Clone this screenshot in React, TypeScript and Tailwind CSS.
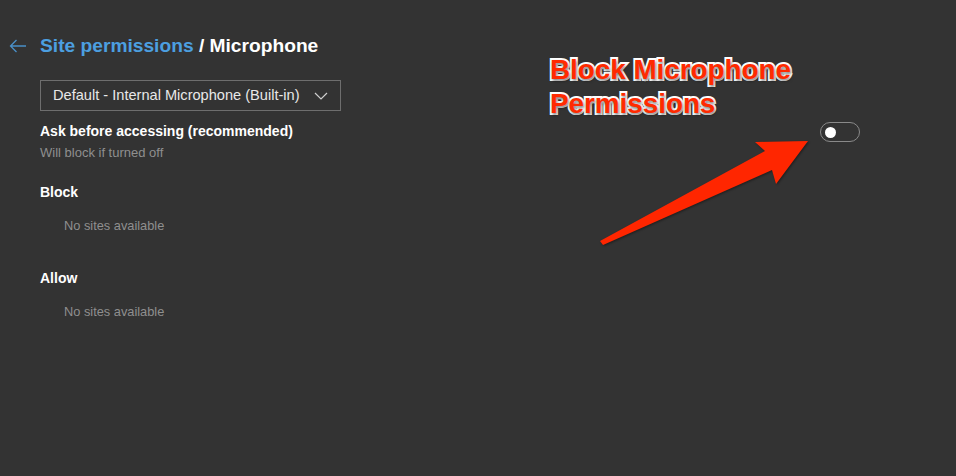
export default function App() {
  return (
    <div className="relative h-[476px] w-[956px] overflow-hidden bg-[#333333] font-['Liberation_Sans',Arial,sans-serif] text-white">
      <div className="flex flex-col pt-[34px]">
        <div className="flex items-center">
          <svg width="18" height="14" viewBox="0 0 18 14" className="ml-[9px] mr-[13px]">
            <path d="M17 7H1.5M7.5 1L1.5 7l6 6" fill="none" stroke="#4a90c8" strokeWidth="1.3" />
          </svg>
          <h1 className="text-[19.2px] font-bold leading-[24px]">
            <span className="text-[#4c9fe0]">Site permissions</span> / Microphone
          </h1>
        </div>

        <div className="ml-[40px] mt-[22px] flex h-[31px] w-[301px] items-center justify-between border border-[#6e6e6e] pl-3 pr-3">
          <span className="text-[14.6px] text-[#e8e8e8]">Default - Internal Microphone (Built-in)</span>
          <svg width="14" height="8" viewBox="0 0 14 8">
            <path d="M1 1l6 6 6-6" fill="none" stroke="#cfcfcf" strokeWidth="1.2" />
          </svg>
        </div>

        <div className="ml-[40px] mt-[10px] flex w-[820px] items-start justify-between">
          <div className="flex flex-col">
            <span className="text-[14px] font-bold leading-[20px]">Ask before accessing (recommended)</span>
            <span className="mt-[3px] text-[13px] leading-[17px] text-[#8f8f8f]">Will block if turned off</span>
          </div>
          <div className="mt-[1px] flex h-[20px] w-[40px] items-center rounded-full border border-[#8a8a8a] px-[4px]">
            <div className="h-[11px] w-[11px] rounded-full bg-white" />
          </div>
        </div>

        <div className="ml-[40px] mt-[21px] text-[14px] font-bold leading-[20px]">Block</div>
        <div className="ml-[64px] mt-[15px] text-[12.8px] leading-[17px] text-[#8f8f8f]">No sites available</div>

        <div className="ml-[40px] mt-[34px] text-[14px] font-bold leading-[20px]">Allow</div>
        <div className="ml-[64px] mt-[15px] text-[12.8px] leading-[17px] text-[#8f8f8f]">No sites available</div>
      </div>

      <div className="absolute left-[550px] top-[53px] text-[27.8px] font-bold leading-[34px] text-[#ff2a00] [paint-order:stroke_fill] [-webkit-text-stroke:4px_white] [text-shadow:1px_2px_3px_rgba(0,0,0,0.5)]">
        Block Microphone
        <br />
        Permissions
      </div>

      <svg className="absolute left-0 top-0" width="956" height="476" viewBox="0 0 956 476">
        <polygon
          points="600,241 765,151 755,142 808,141 776,184 772,170 603,245"
          fill="#ff2600"
          style={{ filter: 'drop-shadow(1px 1px 1px rgba(0,0,0,0.4))' }}
        />
      </svg>
    </div>
  );
}
